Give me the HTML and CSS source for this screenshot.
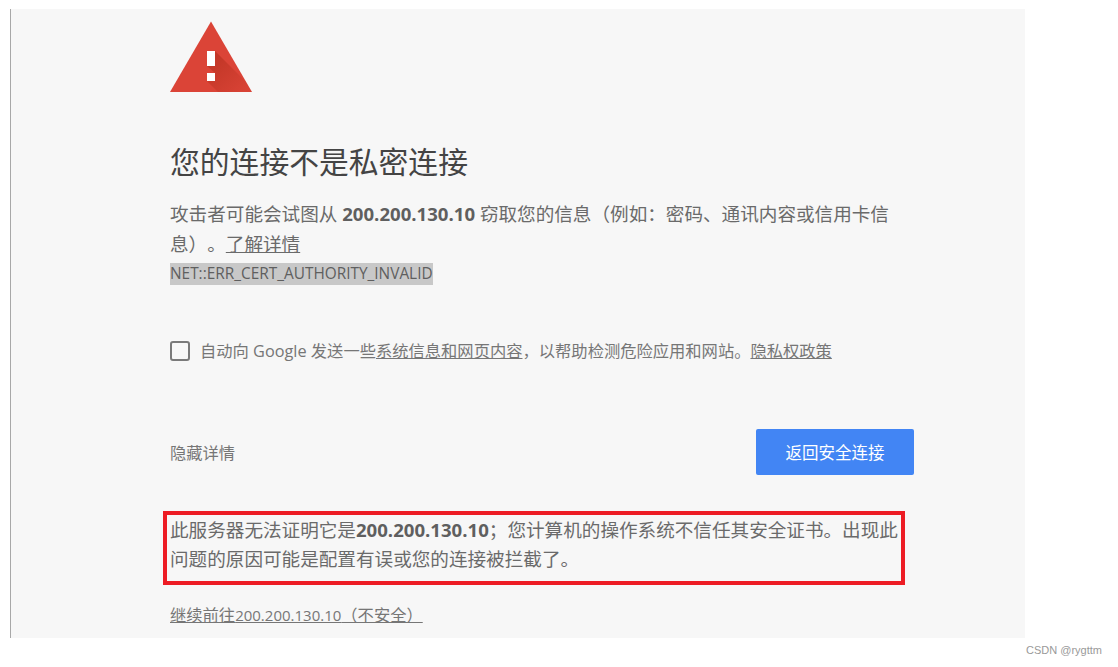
FILE: index.html
```html
<!doctype html>
<html lang="zh-CN">
  <head>
    <meta charset="utf-8">
    <title>隐私设置错误</title>
    <link rel="stylesheet" href="styles.css">
  </head>
  <body>
    <div class="shot">
      <svg class="warn" width="82" height="72" viewBox="0 0 82 72">
        <defs>
          <linearGradient id="fade" x1="0.2" y1="0.2" x2="0.9" y2="0.9">
            <stop offset="0" stop-color="#a52714" stop-opacity="0.45"/>
            <stop offset="1" stop-color="#a52714" stop-opacity="0.05"/>
          </linearGradient>
        </defs>
        <polygon points="41,0.5 82,71 0,71" fill="#db4437"/>
        <polygon points="45,30 76,61 82,71 48,71 37,60 45,60 45,52 37,45 45,45" fill="url(#fade)"/>
        <rect x="37" y="30" width="8" height="15" fill="#fff"/>
        <rect x="37" y="52" width="8" height="8" fill="#fff"/>
      </svg>
      <h1>您的连接不是私密连接</h1>
      <p class="msg">攻击者可能会试图从 <b>200.200.130.10</b> 窃取您的信息（例如：密码、通讯内容或信用卡信息）。<a href="#">了解详情</a></p>
      <div class="code"><span>NET::ERR_CERT_AUTHORITY_INVALID</span></div>
      <div class="report">
        <span class="box"></span>
        <span>自动向 Google 发送一些<a href="#">系统信息和网页内容</a>，以帮助检测危险应用和网站。<a href="#">隐私权政策</a></span>
      </div>
      <div class="actions">
        <a class="hide" href="#">隐藏详情</a>
        <button class="back">返回安全连接</button>
      </div>
      <p class="detail">此服务器无法证明它是<b>200.200.130.10</b>；您计算机的操作系统不信任其安全证书。出现此问题的原因可能是配置有误或您的连接被拦截了。</p>
      <a class="go" href="#">继续前往<span class="host">200.200.130.10</span>（不安全）</a>
    </div>
    <div class="mark">CSDN @rygttm</div>
  </body>
</html>
```

FILE: styles.css
```css
html, body {
    margin: 0;
    padding: 0;
    background: #ffffff;
}
body {
    font-family: "Open Sans", "Noto Sans CJK SC", sans-serif;
    color: #6a6a6a;
    overflow: hidden;
    text-spacing-trim: space-all;
}
.shot {
    box-sizing: border-box;
    width: 1015px;
    height: 629px;
    margin: 9px 0 0 10px;
    padding: 12px 0 0 159px;
    background: #f7f7f7;
    border-left: 1px solid #a8a8a8;
    overflow: hidden;
}
.warn {
    display: block;
}
h1 {
    margin: 49px 0 0 0;
    font-size: 29.8px;
    font-weight: 400;
    line-height: 40px;
    color: #444444;
}
a {
    color: inherit;
}
.msg {
    width: 725px;
    margin: 17px 0 0 0;
    font-size: 18.6px;
    line-height: 30px;
}
.msg b, .detail b {
    color: #5f5f5f;
}
.code {
    margin-top: 4px;
    font-size: 15.4px;
    line-height: 22px;
}
.code span {
    display: inline-block;
    background: #c8c8c8;
    color: #5f5f5f;
}
.report {
    display: flex;
    align-items: center;
    margin-top: 54px;
    font-size: 16.3px;
    line-height: 24px;
    color: #767676;
}
.box {
    box-sizing: border-box;
    width: 20px;
    height: 20px;
    margin-right: 10px;
    border: 2px solid #7a7a7a;
    border-radius: 3px;
}
.actions {
    display: flex;
    justify-content: space-between;
    align-items: center;
    width: 744px;
    margin-top: 66px;
}
.hide {
    font-size: 16.3px;
    text-decoration: none;
    color: #767676;
}
.back {
    width: 158px;
    height: 46px;
    border: 0;
    border-radius: 2px;
    background: #4285f4;
    color: #ffffff;
    font-family: inherit;
    font-size: 16.5px;
}
.detail {
    box-sizing: border-box;
    width: 742px;
    height: 74px;
    margin: 36px 0 0 -7px;
    padding: 0 0 0 3px;
    border: 4px solid #ed1c24;
    font-size: 18.6px;
    line-height: 29px;
}
.go {
    display: inline-block;
    margin-top: 18px;
    font-size: 16.3px;
    line-height: 24px;
    color: #767676;
}
.host {
    font-size: 15px;
}
.mark {
    margin: 5px 16px 0 0;
    text-align: right;
    font-family: "Liberation Sans", sans-serif;
    font-size: 11px;
    line-height: 14px;
    color: #999999;
}
```
